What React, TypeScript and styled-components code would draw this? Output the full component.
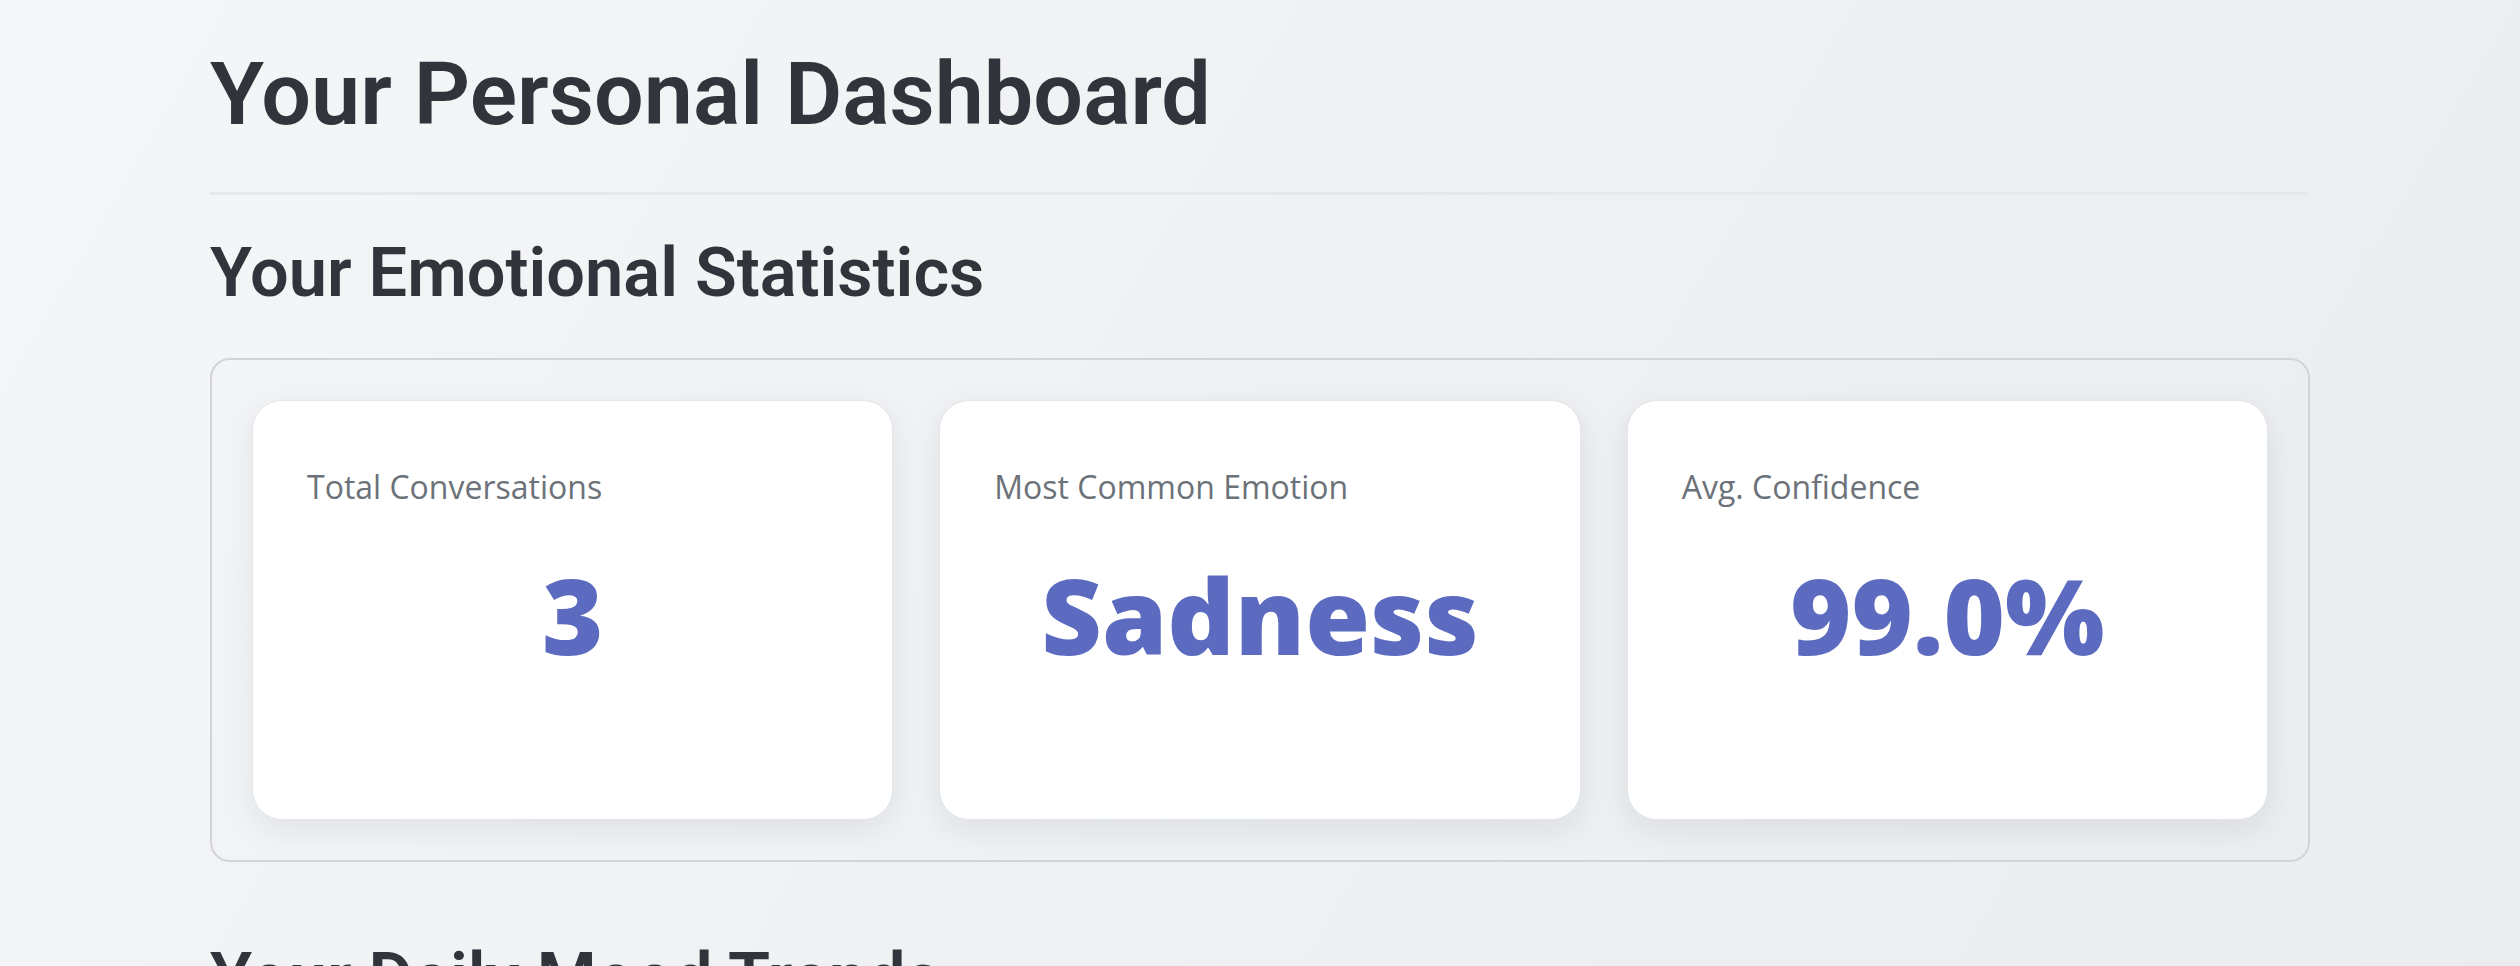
import React from "react";
import styled, { createGlobalStyle } from "styled-components";

const GlobalStyle = createGlobalStyle`
  html, body {
    margin: 0;
    padding: 0;
  }
  body {
    min-height: 966px;
    overflow: hidden;
    background: linear-gradient(120deg, #f5f6f8 0%, #eef0f2 55%, #eaecef 100%);
    font-family: "Open Sans", "Noto Sans", sans-serif;
    color: #31333f;
  }
`;

const Page = styled.main`
  width: 2100px;
  margin: 0 auto;
  padding-top: 41px;
  display: flex;
  flex-direction: column;
`;

const Title = styled.h1`
  margin: 0;
  font-family: Roboto, "Open Sans", sans-serif;
  font-weight: 600;
  font-size: 88px;
  line-height: 1.2;
  color: #31343b;
  letter-spacing: 0;
`;

const Divider = styled.hr`
  margin: 45px 0 0;
  border: 0;
  height: 3px;
  background: #e6e8eb;
`;

const SectionTitle = styled.h2<{ $gap: number }>`
  margin: ${(p) => p.$gap}px 0 0;
  font-family: Roboto, "Open Sans", sans-serif;
  font-weight: 600;
  font-size: 68.5px;
  line-height: 1.2;
  color: #31343b;
`;

const StatsPanel = styled.section`
  margin-top: 44px;
  border: 2px solid #d2d4d8;
  border-radius: 20px;
  padding: 40px;
  display: grid;
  grid-template-columns: repeat(3, 1fr);
  gap: 46px;
`;

const Card = styled.div`
  height: 420px;
  box-sizing: border-box;
  background: #ffffff;
  border: 1px solid #e4e6e9;
  border-radius: 30px;
  box-shadow: 0 10px 32px rgba(30, 35, 45, 0.08);
  padding: 64px 54px 0;
  display: flex;
  flex-direction: column;
`;

const Label = styled.div`
  font-family: "Open Sans", "Noto Sans", sans-serif;
  font-weight: 400;
  font-size: 32px;
  line-height: 1.4;
  color: #6c7279;
`;

const Value = styled.div`
  margin-top: 42px;
  text-align: center;
  font-family: "Open Sans", "Noto Sans", sans-serif;
  font-weight: 800;
  font-size: 105px;
  line-height: 1.2;
  color: #5c6bc0;
`;

const stats = [
  { label: "Total Conversations", value: "3" },
  { label: "Most Common Emotion", value: "Sadness" },
  { label: "Avg. Confidence", value: "99.0%" },
];

export default function App() {
  return (
    <>
      <GlobalStyle />
      <Page>
        <Title>Your Personal Dashboard</Title>
        <Divider />
        <SectionTitle $gap={37}>Your Emotional Statistics</SectionTitle>
        <StatsPanel>
          {stats.map((s) => (
            <Card key={s.label}>
              <Label>{s.label}</Label>
              <Value>{s.value}</Value>
            </Card>
          ))}
        </StatsPanel>
        <SectionTitle $gap={75}>Your Daily Mood Trends</SectionTitle>
      </Page>
    </>
  );
}
